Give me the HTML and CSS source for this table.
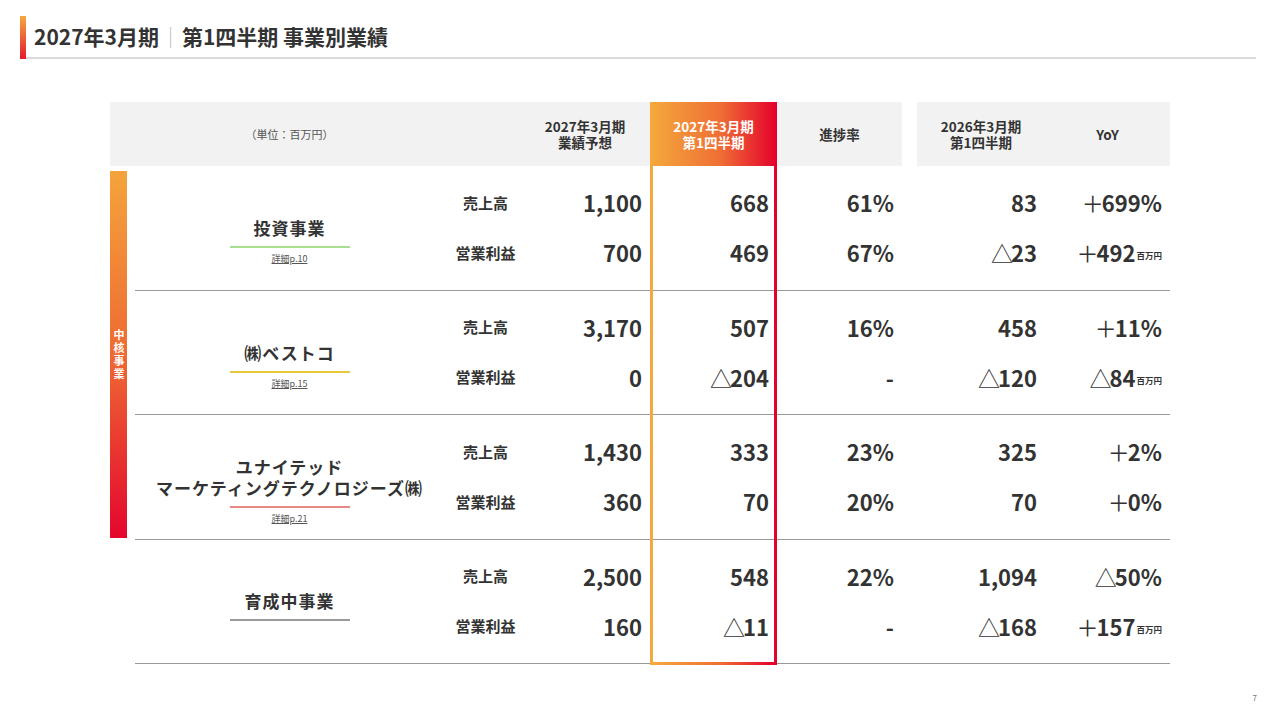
FILE: index.html
```html
<!DOCTYPE html>
<html lang="ja">
<head>
<meta charset="utf-8">
<title>2027年3月期 第1四半期 事業別業績</title>
<link rel="stylesheet" href="styles.css">
</head>
<body>
<header class="title-bar">
  <span class="accent"></span>
  <h1 class="title">2027年3月期<span class="sep">｜</span>第1四半期 事業別業績</h1>
</header>

<section class="table">
  <div class="thead">
    <div class="th th-unit">（単位：百万円）</div>
    <div class="th">2027年3月期<br>業績予想</div>
    <div class="th th-hl">2027年3月期<br>第1四半期</div>
    <div class="th">進捗率</div>
    <div class="th-gap"></div>
    <div class="th">2026年3月期<br>第1四半期</div>
    <div class="th">YoY</div>
  </div>

  <div class="tbody">
    <div class="side">
      <div class="core-bar"><span class="core-text">中核事業</span></div>
    </div>
    <div class="groups">
      <div class="group">
        <div class="name">
          <div class="name-text">投資事業</div>
          <div class="rule rule-green"></div>
          <div class="detail">詳細p.10</div>
        </div>
        <div class="label">売上高</div>
        <div class="num">1,100</div>
        <div class="num">668</div>
        <div class="num">61%</div>
        <div class="gap"></div>
        <div class="num">83</div>
        <div class="num"><span class="sign">＋</span>699%</div>
        <div class="label">営業利益</div>
        <div class="num">700</div>
        <div class="num">469</div>
        <div class="num">67%</div>
        <div class="gap"></div>
        <div class="num"><span class="sign">△</span>23</div>
        <div class="num"><span class="sign">＋</span>492<span class="unit">百万円</span></div>
      </div>

      <div class="group">
        <div class="name">
          <div class="name-text">㈱ベストコ</div>
          <div class="rule rule-yellow"></div>
          <div class="detail">詳細p.15</div>
        </div>
        <div class="label">売上高</div>
        <div class="num">3,170</div>
        <div class="num">507</div>
        <div class="num">16%</div>
        <div class="gap"></div>
        <div class="num">458</div>
        <div class="num"><span class="sign">＋</span>11%</div>
        <div class="label">営業利益</div>
        <div class="num">0</div>
        <div class="num"><span class="sign">△</span>204</div>
        <div class="num">-</div>
        <div class="gap"></div>
        <div class="num"><span class="sign">△</span>120</div>
        <div class="num"><span class="sign">△</span>84<span class="unit">百万円</span></div>
      </div>

      <div class="group">
        <div class="name">
          <div class="name-text">ユナイテッド<br>マーケティングテクノロジーズ㈱</div>
          <div class="rule rule-red"></div>
          <div class="detail">詳細p.21</div>
        </div>
        <div class="label">売上高</div>
        <div class="num">1,430</div>
        <div class="num">333</div>
        <div class="num">23%</div>
        <div class="gap"></div>
        <div class="num">325</div>
        <div class="num"><span class="sign">＋</span>2%</div>
        <div class="label">営業利益</div>
        <div class="num">360</div>
        <div class="num">70</div>
        <div class="num">20%</div>
        <div class="gap"></div>
        <div class="num">70</div>
        <div class="num"><span class="sign">＋</span>0%</div>
      </div>

      <div class="group">
        <div class="name name-plain">
          <div class="name-text">育成中事業</div>
          <div class="rule rule-gray"></div>
        </div>
        <div class="label">売上高</div>
        <div class="num">2,500</div>
        <div class="num">548</div>
        <div class="num">22%</div>
        <div class="gap"></div>
        <div class="num">1,094</div>
        <div class="num"><span class="sign">△</span>50%</div>
        <div class="label">営業利益</div>
        <div class="num">160</div>
        <div class="num"><span class="sign">△</span>11</div>
        <div class="num">-</div>
        <div class="gap"></div>
        <div class="num"><span class="sign">△</span>168</div>
        <div class="num"><span class="sign">＋</span>157<span class="unit">百万円</span></div>
      </div>
    </div>
  </div>

  <div class="hl-frame"></div>
</section>

<footer class="page-no">7</footer>
</body>
</html>
```

FILE: styles.css
```css
* { box-sizing: border-box; }

html, body {
  margin: 0;
  padding: 0;
  background: #ffffff;
}

body {
  width: 1280px;
  height: 720px;
  overflow: hidden;
  font-family: "Noto Sans CJK JP", "Noto Sans", sans-serif;
  color: #333333;
}

/* ---------- title ---------- */
.title-bar {
  display: flex;
  margin: 16px 24px 0 20px;
  height: 43px;
}

.accent {
  width: 6px;
  background: linear-gradient(to bottom, #f5a73f, #e41a2e);
}

.title {
  flex: 1;
  margin: 0;
  padding-left: 8px;
  font-size: 21px;
  font-weight: 700;
  line-height: 41px;
  color: #333333;
  border-bottom: 2px solid #dadada;
}

.sep {
  font-weight: 300;
  color: #b8b8b8;
  margin: 0 1px;
}

/* ---------- table ---------- */
.table {
  position: relative;
  margin: 43px 0 0 110px;
  width: 1060px;
}

.thead {
  display: grid;
  grid-template-columns: 410px 130px 127px 125px 15px 128px 125px;
  height: 64px;
}

.th {
  background: #f2f2f2;
  display: flex;
  align-items: center;
  justify-content: center;
  text-align: center;
  font-size: 13.5px;
  font-weight: 700;
  line-height: 16px;
  color: #333333;
}

.th-unit {
  padding: 0 76px 0 25px;
  font-size: 11px;
  font-weight: 400;
  color: #555555;
}

.th-hl {
  background: linear-gradient(to right, #f4a93c, #ef6f35 55%, #e4002b);
  color: #ffffff;
}

.th-gap {
  background: #ffffff;
}

.tbody {
  display: flex;
}

.side {
  width: 25px;
  padding-top: 5px;
}

.core-bar {
  width: 17px;
  height: 367px;
  background: linear-gradient(to bottom, #f4a43b, #ee6a33 50%, #e4062d);
  display: flex;
  align-items: center;
  justify-content: center;
}

.core-text {
  writing-mode: vertical-rl;
  text-orientation: upright;
  color: #ffffff;
  font-size: 11px;
  font-weight: 700;
  line-height: 17px;
  letter-spacing: 2px;
}

.groups {
  width: 1035px;
}

.group {
  display: grid;
  grid-template-columns: 318px 67px 130px 127px 125px 15px 128px 125px;
  grid-template-rows: 50px 50px;
  padding: 11px 0 12.5px;
  border-bottom: 1px solid #999999;
}

.name {
  grid-row: 1 / 3;
  grid-column: 1;
  display: flex;
  flex-direction: column;
  align-items: center;
  justify-content: center;
  padding: 28px 9px 0 0;
}

.name-plain {
  padding-top: 9px;
}

.name-text {
  font-size: 17px;
  font-weight: 700;
  line-height: 21px;
  letter-spacing: 1px;
  text-align: center;
  color: #333333;
}

.rule {
  width: 120px;
  height: 2px;
  margin-top: 8px;
}

.rule-green { background: #a9dd8f; }
.rule-yellow { background: #e9c93c; }
.rule-red { background: #e98a86; }
.rule-gray { background: #9a9a9a; }

.detail {
  margin-top: 5px;
  font-size: 9px;
  line-height: 12px;
  color: #555555;
  text-decoration: underline;
}

.label {
  grid-column: 2;
  display: flex;
  align-items: center;
  justify-content: center;
  font-size: 15px;
  font-weight: 700;
  color: #333333;
  padding-right: 2px;
}

.num {
  text-align: right;
  padding-right: 8px;
  font-size: 22px;
  font-weight: 700;
  line-height: 50px;
  color: #333333;
  white-space: nowrap;
}

.sign {
  font-weight: 400;
  letter-spacing: -2px;
}

.unit {
  font-size: 8.5px;
  font-weight: 700;
  vertical-align: 3px;
  margin-left: 1px;
}

/* highlighted column frame, drawn over the table */
.hl-frame {
  position: absolute;
  left: 540px;
  top: 0;
  width: 127px;
  height: 563px;
  border: 3px solid;
  border-top-width: 0;
  border-image: linear-gradient(to right, #f4a93c, #ef6f35 55%, #e4002b) 1;
  pointer-events: none;
}

/* ---------- footer ---------- */
.page-no {
  margin-top: 28px;
  padding-right: 23px;
  text-align: right;
  font-size: 8px;
  color: #777777;
}
```
